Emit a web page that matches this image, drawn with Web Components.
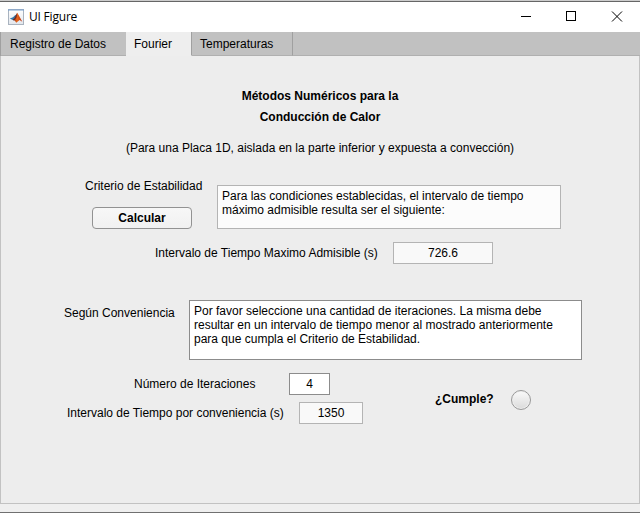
<!DOCTYPE html>
<html lang="es"><head><meta charset="utf-8"><title>UI Figure</title>
<style>
html,body{margin:0;height:513px;overflow:hidden}
body{font:12px/14px "Liberation Sans",Arial,sans-serif;color:#000;background:#ededed}
</style></head><body><figure-window></figure-window>
<script>
const define=(name,html)=>customElements.define(name,class extends HTMLElement{
  constructor(){super();this.attachShadow({mode:'open'}).innerHTML=html;}
});

define('matlab-icon',`<style>:host{display:block;width:16px;height:16px}svg{display:block}</style>
<svg width="16" height="16" viewBox="0 0 16 16"><defs><linearGradient id="g" x2="0" y2="1"><stop stop-color="#fff"/><stop offset="1" stop-color="#e2e6ec"/></linearGradient><linearGradient id="r"><stop stop-color="#7b2415"/><stop offset=".45" stop-color="#e8671b"/><stop offset="1" stop-color="#b52f10"/></linearGradient></defs>
<rect x=".5" y=".5" width="15" height="15" fill="url(#g)" stroke="#a9b3bf"/><rect x="0" y="0" width="16" height="2" fill="#8fa9c8"/><rect x="1" y="1" width="14" height="1" fill="#b9cde3"/>
<path d="M1.800 9.600L5 8.200 7.500 5.800 8.500 7 6.200 11.600 4.800 10.900z" fill="#2f76ab"/><path d="M4.700 10.900L7 8.400 9.200 3.800 10.600 6 14.300 12.700 11.600 10.900 8.200 13.800 6.800 11.400z" fill="url(#r)"/><path d="M9.200 3.800L7.800 6.500 6.400 9.400 4.800 10.900 6.600 11.200 8.600 8.200z" fill="#6b2a28"/></svg>`);

define('title-bar',`<style>:host{display:flex;align-items:center;height:30px;background:#fff;padding-left:8px;box-sizing:border-box;font-family:"Open Sans","Noto Sans",sans-serif}
.t{margin-left:5px;flex:1;letter-spacing:-.2px}svg{display:block}</style>
<matlab-icon></matlab-icon><span class="t"><slot></slot></span>
<svg width="138" height="30" fill="none" stroke="#000" shape-rendering="crispEdges"><path d="M19 14.500h10M64.500 9.500h9v9h-9z"/><path d="M110 9.500l10 10M120 9.500l-10 10" shape-rendering="auto"/></svg>`);

define('tab-item',`<style>:host{display:block;box-sizing:border-box;height:24px;padding:5px 0 0 8px;border-right:1px solid #a0a0a0;border-bottom:1px solid #b0b0b0;background:#c1c1c1}
:host([selected]){background:#eee;border-bottom-color:#eee}:host(:first-child){padding-left:9px}</style><slot></slot>`);

define('tab-bar',`<style>:host{display:flex;height:24px;background:linear-gradient(#b0b0b0,#b0b0b0) 0 23px/100% 1px no-repeat #c1c1c1;border-left:1px solid #a0a0a0;box-sizing:border-box}</style><slot></slot>`);

define('text-label',`<style>:host{display:block;white-space:nowrap;line-height:14px}:host([bold]){font-weight:bold}</style><slot></slot>`);
define('push-button',`<style>:host{display:block}button{display:block;width:100px;height:22px;padding:0;border:1px solid #929292;border-radius:4px;background:linear-gradient(#f7f7f7,#f1f1f1);font:bold 12px/19px "Liberation Sans",Arial,sans-serif;color:#000}</style><button><slot></slot></button>`);
define('edit-field',`<style>:host{display:block;box-sizing:border-box;height:22px;border:1px solid #8c8c8c;background:#fff;text-align:center;line-height:21px}:host([readonly]){border-color:#b4b4b4;background:#f9f9f9}</style><slot></slot>`);
define('text-area',`<style>:host{display:block;box-sizing:border-box;border:1px solid #8c8c8c;background:#fff;padding:3px 4px;white-space:pre;line-height:14px}:host([readonly]){border-color:#b4b4b4;background:#fcfcfc}</style><slot></slot>`);
define('status-lamp',`<style>:host{display:block;box-sizing:border-box;width:20px;height:20px;border:1px solid #999;border-radius:50%;background:linear-gradient(#fafafa,#dadada);box-shadow:inset 0 0 0 1px #eee}</style>`);

define('fourier-panel',`<style>
:host{display:flex;flex-direction:column;box-sizing:border-box;height:448px;border:1px solid #c2c2c2;border-top:0;background:#ededed;padding-top:33px}
.row{display:flex;align-items:flex-start}
.c{text-align:center}
</style>
<text-label bold class="c">Métodos Numéricos para la</text-label>
<text-label bold class="c" style="margin-top:7px">Conducción de Calor</text-label>
<text-label class="c" style="margin-top:17px">(Para una Placa 1D, aislada en la parte inferior y expuesta a convección)</text-label>
<div class="row" style="margin:23px 0 0 84px;height:51px"><div style="width:132px;padding-top:1px"><text-label>Criterio de Estabilidad</text-label><push-button style="margin:14px 0 0 7px">Calcular</push-button></div>
<text-area readonly style="width:344px;height:44px;margin-top:7px">Para las condiciones establecidas, el intervalo de tiempo
máximo admisible resulta ser el siguiente:</text-area></div>
<div class="row" style="margin:13px 0 0 154px"><text-label style="width:238px;padding-top:4px">Intervalo de Tiempo Maximo Admisible (s)</text-label><edit-field readonly style="width:100px">726.6</edit-field></div>
<div class="row" style="margin:36px 0 0 63px"><text-label style="width:125px;padding-top:6px">Según Conveniencia</text-label><text-area style="width:393px;height:60px">Por favor seleccione una cantidad de iteraciones. La misma debe
resultar en un intervalo de tiempo menor al mostrado anteriormente
para que cumpla el Criterio de Estabilidad.</text-area></div>
<div class="row" style="margin-top:13px"><div style="width:434px">
<div class="row" style="margin-left:133px"><text-label style="width:155px;padding-top:4px">Número de Iteraciones</text-label><edit-field style="width:41px">4</edit-field></div>
<div class="row" style="margin:7px 0 0 66px"><text-label style="width:232px;padding-top:4px">Intervalo de Tiempo por conveniencia (s)</text-label><edit-field readonly style="width:64px">1350</edit-field></div></div>
<text-label bold style="width:76px;padding-top:19px">¿Cumple?</text-label><status-lamp style="margin-top:17px"></status-lamp></div>`);

define('figure-window',`<style>:host{display:flex;flex-direction:column;box-sizing:border-box;height:513px;border-bottom:1px solid #707070;background:#efefef}
.edge{height:1px;background:#ccc;border-bottom:1px solid #666;flex:none}</style>
<div class="edge"></div><title-bar>UI Figure</title-bar>
<tab-bar><tab-item style="width:125px;border-right:0">Registro de Datos</tab-item><tab-item selected style="width:66px">Fourier</tab-item><tab-item style="width:101px">Temperaturas</tab-item></tab-bar><fourier-panel></fourier-panel>`);
</script></body></html>
